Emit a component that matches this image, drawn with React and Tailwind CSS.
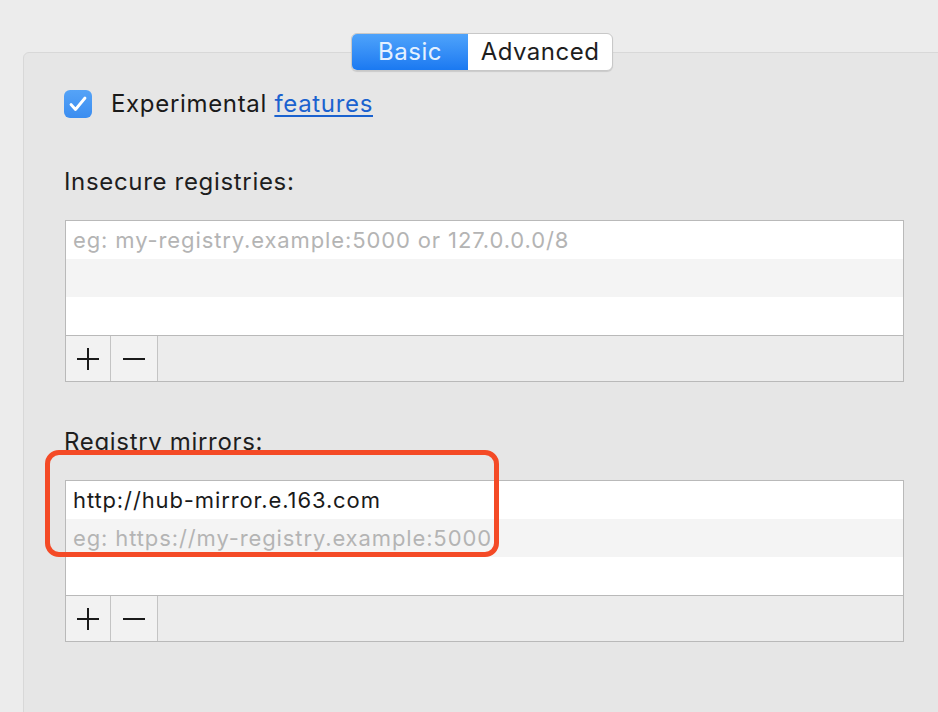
import React from 'react';

const FONT = { fontFamily: 'Inter, "Liberation Sans", Arial, sans-serif' };

function PlusIcon() {
  return (
    <svg width="24" height="24" viewBox="0 0 24 24">
      <path d="M12 1v22M1 12h22" stroke="#1a1a1a" strokeWidth="2" fill="none" />
    </svg>
  );
}

function MinusIcon() {
  return (
    <svg width="24" height="24" viewBox="0 0 24 24">
      <path d="M1 12h22" stroke="#1a1a1a" strokeWidth="2" fill="none" />
    </svg>
  );
}

function RegistryTable({ value, placeholder }) {
  return (
    <div className="w-[839px] border border-[#b9b9b9] bg-white">
      <div className="h-[38px] bg-white flex items-center px-[7px] text-[22px] tracking-[0.04em]">
        {value ? (
          <span className="text-[#1a1a1a]">{value}</span>
        ) : (
          <span className="text-[#b4b4b4]">{placeholder}</span>
        )}
      </div>
      <div className="h-[38px] bg-[#f4f4f4] flex items-center px-[7px] text-[22px] tracking-[0.04em]">
        {value && <span className="text-[#b4b4b4]">{placeholder}</span>}
      </div>
      <div className="h-[38px] bg-white" />
      <div className="h-[46px] border-t border-[#b9b9b9] bg-[#ececec] flex">
        <button className="w-[45px] h-full bg-[#f2f2f2] border-r border-[#c4c4c4] flex items-center justify-center">
          <PlusIcon />
        </button>
        <button className="w-[47px] h-full bg-[#f2f2f2] border-r border-[#c4c4c4] flex items-center justify-center">
          <MinusIcon />
        </button>
      </div>
    </div>
  );
}

export default function App() {
  return (
    <div className="relative w-[938px] h-[712px] overflow-hidden bg-[#ececec]" style={FONT}>
      <div className="relative ml-[23px] mt-[52px] w-[940px] h-[700px] rounded-[6px] border border-[#d8d8d8] bg-[#e6e6e6] pl-[40px] pt-[37px]">
        <div className="absolute left-[327px] -top-[20px] flex h-[38px] rounded-[6px] border border-[#c8c8c8] bg-white shadow-[0_1px_1px_rgba(0,0,0,0.12)] text-[24px] tracking-[0.02em] overflow-hidden">
          <div className="w-[116px] flex items-center justify-center bg-gradient-to-b from-[#4ea3fb] to-[#1a79f1] text-[#e4f1ff]">
            Basic
          </div>
          <div className="w-[144px] flex items-center justify-center text-[#1e1e1e]">
            Advanced
          </div>
        </div>

        <div className="flex items-center gap-[19px] h-[28px]">
          <div className="w-[28px] h-[28px] rounded-[6px] bg-gradient-to-b from-[#55a3f7] to-[#3b8df0] flex items-center justify-center">
            <svg width="18" height="16" viewBox="0 0 18 16">
              <path d="M2 8.5l4.5 5L16 2" stroke="white" strokeWidth="2.8" fill="none" strokeLinecap="round" strokeLinejoin="round" />
            </svg>
          </div>
          <div className="text-[24px] tracking-[0.028em] text-[#1a1a1a]">
            Experimental <span className="text-[#1b62cf] underline underline-offset-[3px]">features</span>
          </div>
        </div>

        <div className="mt-[50px] text-[24px] leading-[28px] tracking-[0.028em] text-[#1e1e1e]">Insecure registries:</div>
        <div className="mt-[24px] ml-[1px]">
          <RegistryTable placeholder="eg: my-registry.example:5000 or 127.0.0.0/8" />
        </div>

        <div className="mt-[46px] text-[24px] leading-[28px] tracking-[0.028em] text-[#1e1e1e]">Registry mirrors:</div>
        <div className="mt-[24px] ml-[1px]">
          <RegistryTable value="http://hub-mirror.e.163.com" placeholder="eg: https://my-registry.example:5000" />
        </div>
      </div>

      <div className="absolute left-[45px] top-[450px] w-[454px] h-[107px] rounded-[14px] border-[5px] border-[#f44a26]" />
    </div>
  );
}
